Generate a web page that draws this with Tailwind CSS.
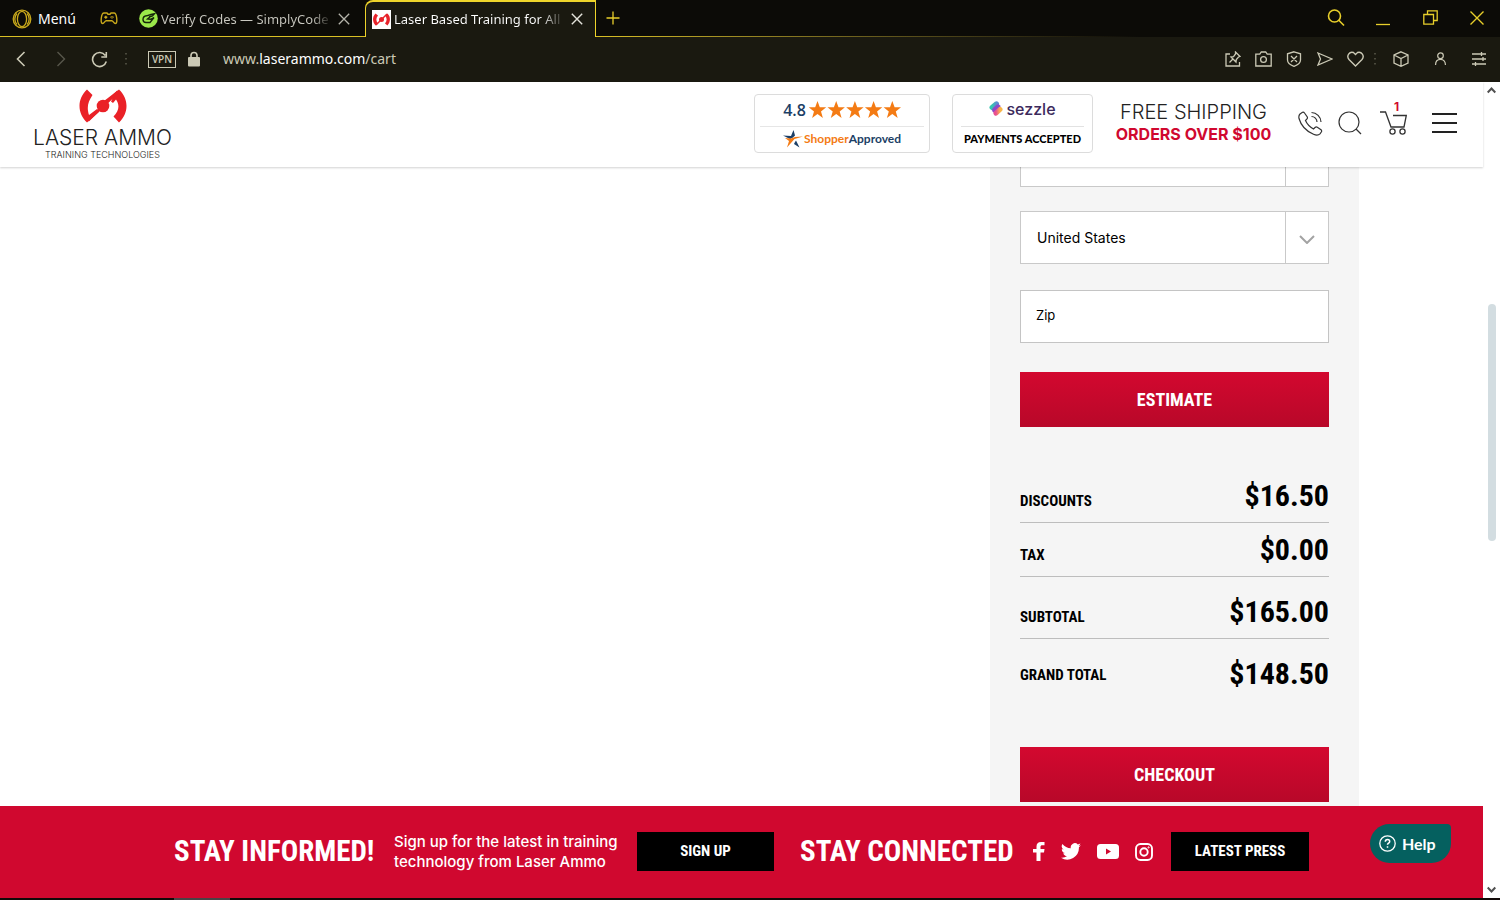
<!DOCTYPE html>
<html lang="en">
<head>
<meta charset="utf-8">
<title>Laser Ammo cart</title>
<script src="https://cdn.jsdelivr.net/npm/@tailwindcss/browser@4"></script>
</head>
<body class="flex h-screen flex-col overflow-hidden bg-white font-['Inter',sans-serif] text-black">

<!-- Browser chrome -->
<div class="shrink-0 bg-[#1a1910] font-['Noto_Sans',sans-serif] text-[14px] leading-5">
  <div class="flex h-[37px] bg-[#0c0b07]">
    <div class="flex w-[365px] shrink-0 items-center border-b border-[#d9bf24] pt-px pl-3">
      <button class="flex w-[63px] items-center gap-[6px] text-white">
        <svg class="size-5 shrink-0" viewBox="0 0 20 20" fill="none" stroke="#c9a91c" stroke-width="1.3"><circle cx="10" cy="10" r="8.8"/><ellipse cx="10" cy="10" rx="4.6" ry="7.6"/><path d="M5 4.500a8 8 0 0 0 0 11M15 4.500a8 8 0 0 1 0 11"/></svg>
        <span>Menú</span>
      </button>
      <svg class="ml-[25px] h-5 w-[18px] shrink-0" viewBox="0 0 18 20" fill="none" stroke="#c9a91c" stroke-width="1.4"><path d="M4 4h3l1 1.300h2L11 4h3c1.600 0 2.300 1.700 2.700 5 .3 3 .3 5.500-1.400 5.500-1.500 0-2-2.700-3.500-2.700H6.200c-1.500 0-2 2.700-3.500 2.700C1 14.500 1 12 1.300 9 1.700 5.700 2.400 4 4 4z"/><path d="M5.800 6.800v3M4.300 8.300h3M10.500 8.300h1M12.500 8.300h1M12 7v.6M12 9v.6"/></svg>
      <svg class="ml-[21px] size-[19px] shrink-0" viewBox="0 0 19 19"><circle cx="9.500" cy="9.500" r="9.300" fill="#9be84a"/><path d="M4 10.500c0-2 1.500-3.500 3.500-3.700L12 5.500l3.500-.8-2 2.300-3.500 1M4 10.500c0 2 1 3 3 3h4l4-5-3.500 1.800-3-.3 3-2.500" fill="none" stroke="#15250a" stroke-width="1.400"/></svg>
      <span class="ml-[3px] w-[172px] whitespace-nowrap bg-gradient-to-r from-[#c9c8c0] from-88% to-[#0c0b07] bg-clip-text text-[13px] text-transparent">Verify Codes — SimplyCode</span>
      <button aria-label="Close tab" class="ml-[5px]"><svg class="size-3" viewBox="0 0 12 12" stroke="#b5b4ab" stroke-width="1.300"><path d="M.8.8l10.400 10.400M11.200.8L.8 11.200"/></svg></button>
    </div>
    <div class="flex w-[231px] shrink-0 items-center rounded-tl-lg border-x border-t-2 border-[#eed42b] bg-[#1a1910] pb-px pl-[6px]">
      <svg class="size-[19px] shrink-0" viewBox="0 0 19 19"><path fill="#fff" d="M0 0h19v19H0z"/><path d="M3.500 3.500C0 7 .5 12 3.500 15.500L6 13.500C3.800 11 3.800 8 6 5.500zM15.500 3.500c3.500 3.500 3 8.500 0 12L13 13.500c2.200-2.500 2.200-5.500 0-8z" fill="#e8232a"/><circle cx="9.500" cy="9.500" r="2.500" fill="#e8232a"/><path d="M4 15L15 4" stroke="#e8232a" stroke-width="1.400"/></svg>
      <span class="ml-[3px] w-[172px] whitespace-nowrap bg-gradient-to-r from-white from-86% to-[#1a1910] bg-clip-text text-[13px] text-transparent">Laser Based Training for All</span>
      <button aria-label="Close tab" class="ml-[5px]"><svg class="size-3" viewBox="0 0 12 12" stroke="#e5e4dc" stroke-width="1.400"><path d="M.8.8l10.400 10.400M11.200.8L.8 11.200"/></svg></button>
    </div>
    <div class="flex min-w-0 grow flex-col">
      <div class="flex h-9 items-center pr-4 pb-px pl-[10px]">
        <button aria-label="New tab"><svg class="size-[14px]" viewBox="0 0 14 14" stroke="#e8cf2b" stroke-width="1.300"><path d="M7 .5v13M.5 7h13"/></svg></button>
        <button aria-label="Search tabs" class="ml-auto"><svg class="size-[18px]" viewBox="0 0 18 18" fill="none" stroke="#e8cf2b" stroke-width="1.600"><circle cx="7.500" cy="7" r="6"/><path d="M11.800 11.300l5.200 5.200"/></svg></button>
        <button aria-label="Minimise" class="ml-[31px]"><svg class="h-4 w-[14px]" viewBox="0 0 14 16" stroke="#e8cf2b" stroke-width="1.300"><path d="M0 14.500h14"/></svg></button>
        <button aria-label="Restore" class="ml-[33px]"><svg class="size-[15px]" viewBox="0 0 15 15" fill="none" stroke="#e8cf2b" stroke-width="1.300"><path d="M.8 4.500h9.700v9.700H.8zM4.500 4.500V.8h9.700v9.700h-3.700"/></svg></button>
        <button aria-label="Close" class="ml-8"><svg class="size-[14px]" viewBox="0 0 14 14" stroke="#e8cf2b" stroke-width="1.400"><path d="M.5.5l13 13M13.500.5l-13 13"/></svg></button>
      </div>
      <div class="h-px bg-gradient-to-r from-[#d9bf24] to-[#0c0b07] to-60%"></div>
    </div>
  </div>
  <div class="flex h-[45px] items-center pr-[14px] pb-px pl-4 text-[#cbc9b5]">
    <button aria-label="Back"><svg class="h-4 w-[10px]" viewBox="0 0 10 16" fill="none" stroke="currentColor" stroke-width="1.600"><path d="M8.500 1L1.500 8l7 7"/></svg></button>
    <button aria-label="Forward" class="ml-[30px]"><svg class="h-4 w-[10px]" viewBox="0 0 10 16" fill="none" stroke="#57564a" stroke-width="1.400"><path d="M1.500 1l7 7-7 7"/></svg></button>
    <button aria-label="Reload" class="ml-[25px]"><svg class="size-[17px]" viewBox="0 0 17 17" fill="none" stroke="currentColor" stroke-width="1.600"><path d="M14.300 4.500A7 7 0 1 0 15.300 10.500M15.300 1v5h-5"/></svg></button>
    <svg class="ml-[17px] h-4 w-[3px]" viewBox="0 0 3 16" fill="#4b4a3d"><path d="M0 2h2v1.500H0zM0 7h2v1.500H0zM0 12h2v1.500H0z"/></svg>
    <span class="ml-5 h-[17px] w-[28px] border border-[#cbc9b5] text-center font-['Open_Sans',sans-serif] text-[10px] leading-[15px] font-semibold">VPN</span>
    <svg class="ml-3 h-[16px] w-3" viewBox="0 0 12 16"><path d="M3 7V4.500a3 3 0 0 1 6 0V7" fill="none" stroke="#cbc9b5" stroke-width="1.600"/><rect y="6" width="12" height="9.500" rx="1" fill="#cbc9b5"/></svg>
    <span class="ml-[23px]">www.<span class="text-white">laserammo.com</span>/cart</span>
    <div class="ml-auto flex items-center">
      <svg class="size-4" viewBox="0 0 16 16" fill="none" stroke="currentColor" stroke-width="1.300"><path d="M5 3H1v12h13.500v-4M4.500 11.500l3.200-3.200M10.500 1l4.500 4.500-1.500.5-2.200 2.500-.3 2.500L6 6l2.500-.3L10.500 3z"/></svg>
      <svg class="ml-[14px] h-4 w-[17px]" viewBox="0 0 17 16" fill="none" stroke="currentColor" stroke-width="1.300"><path d="M.8 3.200h4L6.300 1h4.400l1.500 2.200h4V15H.8z"/><circle cx="8.500" cy="8.500" r="2.900"/></svg>
      <svg class="ml-[14px] size-4" viewBox="0 0 16 16" fill="none" stroke="currentColor" stroke-width="1.300"><path d="M8 .8l6.500 2V9c0 3-3 5-6.500 6.300C4.500 14 1.500 12 1.500 9V2.800zM5 5l6 6M11 5l-6 6"/></svg>
      <svg class="ml-[15px] h-[14px] w-4" viewBox="0 0 16 14" fill="none" stroke="currentColor" stroke-width="1.300"><path d="M1 1l14 6L1 13l2.500-6z"/></svg>
      <svg class="ml-[14px] h-4 w-[17px]" viewBox="0 0 17 16" fill="none" stroke="currentColor" stroke-width="1.400"><path d="M8.500 15L2 8.500C-1 5 2.500 0 6.500 1.500L8.500 3.500l2-2C14.500 0 18 5 15 8.500z"/></svg>
      <svg class="ml-[10px] h-4 w-[3px]" viewBox="0 0 3 16" fill="#4b4a3d"><path d="M0 2h2v1.500H0zM0 7h2v1.500H0zM0 12h2v1.500H0z"/></svg>
      <svg class="ml-4 size-4" viewBox="0 0 16 16" fill="none" stroke="currentColor" stroke-width="1.300"><path d="M8 .8l7 3.200v8L8 15.300 1 12V4zM1 4l7 3.500L15 4M8 7.500v7.800"/></svg>
      <svg class="ml-[25px] h-[14px] w-[13px]" viewBox="0 0 13 15" fill="none" stroke="currentColor" stroke-width="1.300"><circle cx="6.500" cy="4" r="3"/><path d="M1.200 14c0-4 2-6 5.300-6s5.300 2 5.300 6"/></svg>
      <svg class="ml-[25px] h-[14px] w-[14px]" viewBox="0 0 14 14" fill="none" stroke="currentColor" stroke-width="1.300"><path d="M0 2h14M0 7h14M0 12h14M9.500 0v4M11 5v4M3.500 10v4"/></svg>
    </div>
  </div>
</div>

<div class="flex min-h-0 grow">
  <div class="relative flex min-w-0 grow flex-col">

    <header class="z-10 flex h-[85px] shrink-0 items-center bg-white pr-[26px] pb-[3px] pl-[33px] shadow-[0_1px_2px_rgba(0,0,0,0.18)]">
      <a href="#" class="flex w-[139px] flex-col items-center pt-[3px] text-[#222]">
        <svg class="h-[34px] w-12" viewBox="0 0 48 34"><path d="M8 .5C-2 10-2 24 8 33.500L20.500 22.500 18 20l-8 6C7.500 18 9 13 13.500 6zM40 .5c10 9.500 10 23.500 0 33l-5.500-6C40 22 41 16 37 10.500L34 14l-2-1.500 1.500-3L28 15l-3-3z" fill="#ea2127"/><path d="M9 31.500L39 2.500" stroke="#ea2127" stroke-width="2.500"/><circle cx="24" cy="17" r="6.300" fill="#ea2127"/></svg>
        <span class="mt-[3px] text-[21px] leading-6 font-light whitespace-nowrap">LASER AMMO</span>
        <span class="text-[9px] leading-[10px] font-light whitespace-nowrap">TRAINING TECHNOLOGIES</span>
      </a>
      <div class="ml-auto flex items-center">
        <a href="#" class="flex h-[59px] w-[176px] flex-col items-center rounded border border-[#dcdcdc] px-[5px]">
          <span class="flex h-8 w-full items-center justify-center gap-[3px] border-b border-[#e6e6e6] font-['Open_Sans',sans-serif] text-[16px] font-semibold text-[#1c3f66]">4.8
            <svg class="h-[18px] w-[92px]" viewBox="0 0 92 18" fill="#f47b14"><defs><path id="s" d="M8.500 0l2.300 6.300h6.400l-5.200 4.200 1.900 6.500-5.400-3.900L3.100 17 5 10.500-.2 6.300h6.400z"/></defs><use href="#s"/><use href="#s" x="18.700"/><use href="#s" x="37.400"/><use href="#s" x="56.100"/><use href="#s" x="74.800"/></svg>
          </span>
          <span class="flex grow items-center font-['Lato',sans-serif] text-[12px] font-bold text-[#1c3f66]">
            <svg class="mr-px h-[18px] w-5" viewBox="0 0 20 18"><path d="M0 5.500l8 .5L10.500 0 12 5.500l-2 2L7 9z" fill="#1c3f66"/><path d="M20 6.500L11.500 9 4 17.500 6 11 2 8l6 .5 4-1.500z" fill="#f47b14"/><path d="M13 10.500L16.500 17.500 11 14l1-2z" fill="#1c3f66"/></svg>
            <span class="text-[#f47b14]">Shopper</span>Approved
          </span>
        </a>
        <a href="#" class="ml-[22px] flex h-[59px] w-[141px] flex-col items-center rounded border border-[#dcdcdc] px-2">
          <span class="flex h-8 w-full items-center justify-center gap-[3px] border-b border-[#e2e2e2] pb-[3px] text-[16px] font-medium text-[#3c2a5c]">
            <svg class="h-[15px] w-[14px]" viewBox="0 0 14 15" stroke-width="5" stroke-linecap="round"><defs><linearGradient id="g1"><stop stop-color="#35c6b0"/><stop offset="1" stop-color="#5a8fd0"/></linearGradient><linearGradient id="g2"><stop stop-color="#e94f90"/><stop offset="1" stop-color="#f9b64a"/></linearGradient></defs><path d="M3 6.500L7.500 2.800" stroke="url(#g1)"/><path d="M5.500 9L9 6" stroke="#8d49c8"/><path d="M7 12.200l4-3.700" stroke="url(#g2)"/></svg>
            sezzle
          </span>
          <span class="flex grow items-center font-['Lato',sans-serif] text-[11px] font-black whitespace-nowrap">PAYMENTS ACCEPTED</span>
        </a>
        <div class="ml-[22px] w-[157px] text-center whitespace-nowrap">
          <div class="text-[20px] leading-[22px] font-light text-[#222]">FREE SHIPPING</div>
          <div class="text-[16px] leading-[22px] font-bold text-[#d0082f]">ORDERS OVER $100</div>
        </div>
        <button aria-label="Phone" class="ml-[26px]"><svg class="h-[25px] w-[25px]" viewBox="0 0 25 25" fill="none" stroke="#333" stroke-width="1.200"><path d="M2 3l2.500-1.700c1-.4 1.500 0 2 .7L9.300 6c.4 1 .2 1.500-.5 2.200L7.500 9.500c1.500 3.500 4.500 6.500 8 8.500l1.500-1.500c.8-.7 1.500-.8 2.300-.3l3.700 2.600c.8.700.8 1.400.3 2.200l-1.300 1.800c-1.500 1.500-4 1.500-6.500.4C9 20.500 3 14.500 1 7.500.6 5.500 1 4 2 3zM13.500 5.500c3 0 5.500 2.500 5.500 5.500M13.500 1.500c5 0 9.500 4.500 9.500 9.500"/></svg></button>
        <button aria-label="Search" class="ml-[15px]"><svg class="size-6" viewBox="0 0 24 24" fill="none" stroke="#333" stroke-width="1.200"><circle cx="11" cy="11" r="10"/><path d="M18 18l5 5"/></svg></button>
        <button aria-label="Cart, 1 item" class="relative ml-[18px]"><svg class="h-6 w-[27px]" viewBox="0 0 27 24" fill="none" stroke="#333" stroke-width="1.300"><path d="M0 1h5.500l5.500 15h13l2.300-11.500H13"/><circle cx="12.500" cy="20.500" r="2.600"/><circle cx="22.500" cy="20.500" r="2.600"/></svg><span class="absolute -top-3 left-[14px] text-[12px] leading-4 font-bold text-[#d0082f]">1</span></button>
        <button aria-label="Menu" class="ml-[25px] flex flex-col gap-[7px]"><span class="h-[2px] w-[25px] bg-[#222]"></span><span class="h-[2px] w-[25px] bg-[#222]"></span><span class="h-[2px] w-[25px] bg-[#222]"></span></button>
      </div>
    </header>

    <main class="flex min-h-0 grow justify-end overflow-hidden pr-[124px]">
      <form class="w-[369px] bg-[#f5f5f5] px-[30px]">
        <div class="-mt-[33px] grid h-[53px] grid-cols-[1fr_44px]">
          <select aria-label="Shipping method" class="col-span-2 col-start-1 row-start-1 appearance-none border border-[#c9c9c9] bg-white px-4 text-[14px]"><option></option></select>
          <span class="pointer-events-none col-start-2 row-start-1 border-l border-[#c9c9c9]"></span>
        </div>
        <div class="mt-6 grid h-[53px] grid-cols-[1fr_44px]">
          <select aria-label="Country" class="col-span-2 col-start-1 row-start-1 appearance-none border border-[#c9c9c9] bg-white px-4 text-[14px]"><option>United States</option></select>
          <span class="pointer-events-none col-start-2 row-start-1 flex items-center justify-center border-l border-[#c9c9c9] pt-[3px] pr-[2px]"><svg class="h-[9px] w-4" viewBox="0 0 16 9" fill="none" stroke="#a3a3a3" stroke-width="2"><path d="M1 1l7 7 7-7"/></svg></span>
        </div>
        <input aria-label="Zip" placeholder="Zip" class="mt-[26px] block h-[53px] w-full border border-[#c4c4c4] bg-white px-[15px] pb-[3px] text-[13px] placeholder:text-black">
        <button type="button" class="mt-[29px] block h-[55px] w-full bg-gradient-to-b from-[#d3082f] to-[#b80829] font-['Roboto_Condensed','Liberation_Sans_Narrow',sans-serif] text-[18px] font-bold text-white">ESTIMATE</button>

        <dl class="mt-[48px] font-['Roboto_Condensed','Liberation_Sans_Narrow',sans-serif] font-bold">
          <div class="flex h-[48px] items-end justify-between border-b border-[#bdbdbd] pb-[7px]"><dt class="text-[15px] leading-7">DISCOUNTS</dt><dd class="text-[30px] leading-[38px]">$16.50</dd></div>
          <div class="flex h-[54px] items-end justify-between border-b border-[#bdbdbd] pb-[7px]"><dt class="text-[15px] leading-7">TAX</dt><dd class="text-[30px] leading-[38px]">$0.00</dd></div>
          <div class="flex h-[62px] items-end justify-between border-b border-[#bdbdbd] pb-[7px]"><dt class="text-[15px] leading-7">SUBTOTAL</dt><dd class="text-[30px] leading-[38px]">$165.00</dd></div>
          <div class="flex h-[62px] items-end justify-between pb-[8px]"><dt class="text-[15px] leading-9">GRAND TOTAL</dt><dd class="text-[30px] leading-[38px]">$148.50</dd></div>
        </dl>
        <button type="button" class="mt-[46px] block h-[55px] w-full bg-gradient-to-b from-[#d3082f] to-[#b80829] font-['Roboto_Condensed','Liberation_Sans_Narrow',sans-serif] text-[18px] font-bold text-white">CHECKOUT</button>
      </form>
    </main>

    <footer class="flex h-[92px] shrink-0 items-center justify-center bg-[#d0082f] pb-px whitespace-nowrap text-white">
      <h2 class="w-[204px] font-['Roboto_Condensed','Liberation_Sans_Narrow',sans-serif] text-[29px] font-bold">STAY INFORMED!</h2>
      <p class="ml-4 w-[230px] text-[15px] leading-5 font-medium">Sign up for the latest in training<br>technology from Laser Ammo</p>
      <button class="ml-[13px] h-[39px] w-[137px] bg-black font-['Roboto_Condensed','Liberation_Sans_Narrow',sans-serif] text-[15px] font-bold">SIGN UP</button>
      <h2 class="ml-[26px] w-[209px] font-['Roboto_Condensed','Liberation_Sans_Narrow',sans-serif] text-[29px] font-bold">STAY CONNECTED</h2>
      <a href="#" aria-label="Facebook" class="ml-6"><svg class="h-[19px] w-3" viewBox="0 0 12 19" fill="#fff"><path d="M3.500 19v-8.500H0V7h3.500V4.500C3.500 1.500 5 0 8 0h3.500v3.300H9.300C8 3.300 7.500 3.800 7.500 5v2h4l-.5 3.500H7.500V19z"/></svg></a>
      <a href="#" aria-label="Twitter" class="ml-4"><svg class="h-[17px] w-5" viewBox="0 0 24 20" fill="#fff"><path d="M24 2.400a10 10 0 0 1-2.800.8A5 5 0 0 0 23.300.5a10 10 0 0 1-3.100 1.200 4.900 4.900 0 0 0-8.400 4.500A14 14 0 0 1 1.700 1a4.900 4.900 0 0 0 1.500 6.600 5 5 0 0 1-2.200-.6 4.900 4.900 0 0 0 3.900 4.900 5 5 0 0 1-2.200.1 4.900 4.900 0 0 0 4.600 3.400A9.900 9.900 0 0 1 0 17.500 14 14 0 0 0 21.500 5z"/></svg></a>
      <a href="#" aria-label="YouTube" class="ml-4"><svg class="h-[15px] w-[22px]" viewBox="0 0 22 15"><rect width="22" height="15" rx="3.500" fill="#fff"/><path d="M9 4.500v6l5-3z" fill="#d0082f"/></svg></a>
      <a href="#" aria-label="Instagram" class="ml-4"><svg class="size-[18px]" viewBox="0 0 18 18" fill="none" stroke="#fff" stroke-width="1.900"><rect x="1" y="1" width="16" height="16" rx="4.500"/><circle cx="9" cy="9" r="3.700"/><circle cx="13.600" cy="4.400" r=".6" stroke-width="1"/></svg></a>
      <button class="ml-[18px] h-[39px] w-[138px] bg-black font-['Roboto_Condensed','Liberation_Sans_Narrow',sans-serif] text-[15px] font-bold">LATEST PRESS</button>
    </footer>
    <button class="absolute right-8 bottom-[35px] z-20 flex h-[39px] w-[81px] items-center gap-[6px] rounded-[20px] rounded-tr-[4px] bg-[#05605f] pl-[9px] font-['Lato',sans-serif] text-[16px] font-bold text-white">
      <svg class="size-[17px]" viewBox="0 0 17 17" fill="none" stroke="#fff" stroke-width="1.300"><circle cx="8.500" cy="8.500" r="7.700"/><path d="M6.300 6.800c0-1.500 1-2.300 2.200-2.300s2.200.8 2.200 2c0 1.600-2.200 1.700-2.200 3.300M8.500 11.300v1.400" stroke-width="1.500"/></svg>Help
    </button>
  </div>

  <!-- Page scrollbar -->
  <div class="flex w-[17px] shrink-0 flex-col items-center bg-white pt-[5px] pb-[5px]">
    <svg class="h-[7px] w-[9px]" viewBox="0 0 9 7" fill="none" stroke="#505050" stroke-width="2"><path d="M.7 5.500l3.800-4 3.800 4"/></svg>
    <div class="mt-[210px] h-[237px] w-2 rounded-full bg-[#d3dde1]"></div>
    <svg class="mt-auto h-[7px] w-[9px]" viewBox="0 0 9 7" fill="none" stroke="#505050" stroke-width="2"><path d="M.7 1.500l3.800 4 3.800-4"/></svg>
  </div>
</div>
<div class="h-[2px] shrink-0 bg-[#120a08]"><div class="ml-[174px] h-full w-14 bg-[#4a4345]"></div></div>
</body>
</html>
